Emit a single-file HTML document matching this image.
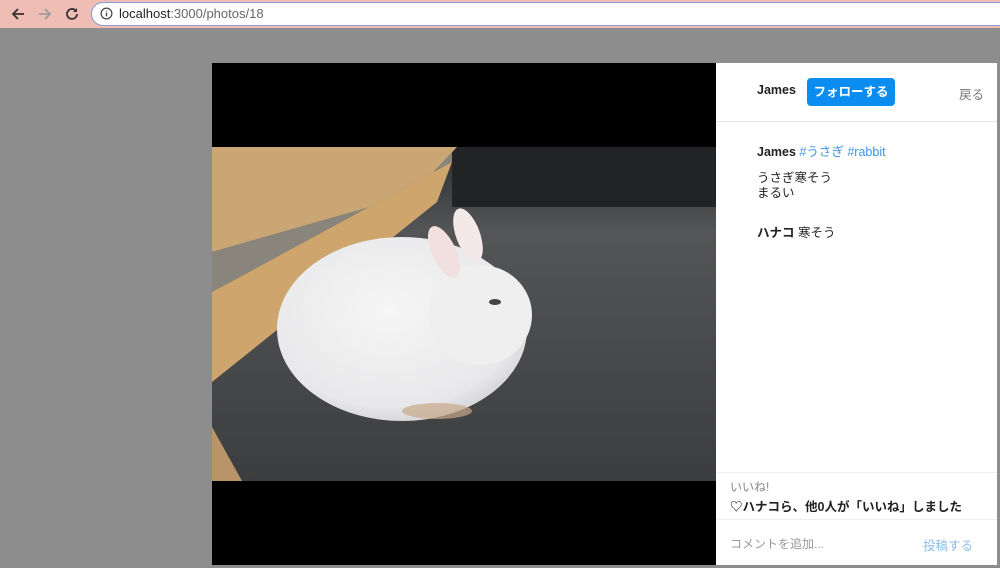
<!DOCTYPE html>
<html><head><meta charset="utf-8"><style>
*{margin:0;padding:0;box-sizing:border-box}
body{width:1000px;height:568px;overflow:hidden;background:#8d8d8d;font-family:"Liberation Sans","Noto Sans CJK JP",sans-serif;position:relative}
.bar{position:absolute;left:0;top:0;width:1000px;height:28px;background:#efbdb3}
.url{position:absolute;left:91px;top:2px;width:920px;height:24px;background:#fff;border:1.5px solid #8a9ad8;border-radius:12px;font-size:13px;color:#222;line-height:21px;padding-left:27px}
.url span{color:#666}
.ic{position:absolute;top:6px}
.photo{position:absolute;left:212px;top:63px;width:504px;height:502px;background:#000}
.panel{position:absolute;left:716px;top:63px;width:281px;height:502px;background:#fff}
.t{position:absolute;font-size:12.5px;color:#222;white-space:nowrap}
b{font-weight:bold}
</style></head><body>
<div class="bar">
<svg class="ic" style="left:10px" width="16" height="16" viewBox="0 0 16 16"><path d="M14 8H3M8 3L3 8l5 5" stroke="#333" stroke-width="1.8" fill="none"/></svg>
<svg class="ic" style="left:37px" width="16" height="16" viewBox="0 0 16 16"><path d="M2 8h11M8 3l5 5-5 5" stroke="#999" stroke-width="1.6" fill="none"/></svg>
<svg class="ic" style="left:64px" width="16" height="16" viewBox="0 0 16 16"><path d="M13 8a5 5 0 1 1-1.5-3.6" stroke="#333" stroke-width="1.8" fill="none"/><path d="M13 2v4h-4z" fill="#333"/></svg>
<div class="url"><svg style="position:absolute;left:8px;top:4px" width="13" height="13" viewBox="0 0 14 14"><circle cx="7" cy="7" r="5.8" stroke="#444" stroke-width="1.3" fill="none"/><path d="M7 6v4M7 4v.8" stroke="#444" stroke-width="1.4"/></svg>localhost<span>:3000/photos/18</span></div>
</div>
<div class="photo">
<svg style="position:absolute;left:0;top:84px" width="504" height="334" viewBox="0 0 504 334">
<defs>
<radialGradient id="rb" cx="0.45" cy="0.4" r="0.65"><stop offset="0" stop-color="#f6f6f6"/><stop offset="0.8" stop-color="#e8e8ea"/><stop offset="1" stop-color="#cfcfd2"/></radialGradient>
<linearGradient id="fl" x1="0" y1="0" x2="0" y2="1"><stop offset="0" stop-color="#2c2d2e"/><stop offset="0.25" stop-color="#545556"/><stop offset="1" stop-color="#3c3d3f"/></linearGradient>
</defs>
<rect width="504" height="334" fill="url(#fl)"/>
<rect x="240" y="0" width="264" height="60" fill="#222324"/>
<polygon points="0,0 245,0 200,48 0,105" fill="#c9a674"/>
<polygon points="0,105 200,48 240,5 240,15 0,145" fill="#8a857c"/>
<polygon points="0,145 240,15 225,55 0,235" fill="#cda56d"/>
<polygon points="0,280 30,334 0,334" fill="#b89468"/>
<ellipse cx="190" cy="182" rx="125" ry="92" fill="url(#rb)"/>
<ellipse cx="268" cy="168" rx="52" ry="50" fill="#efefef"/>
<ellipse cx="232" cy="105" rx="12" ry="28" transform="rotate(-25 232 105)" fill="#f2e0e0"/>
<ellipse cx="256" cy="88" rx="12" ry="28" transform="rotate(-20 256 88)" fill="#f4e8e8"/>
<ellipse cx="225" cy="264" rx="35" ry="8" fill="#c8a88a" opacity="0.7"/>
<ellipse cx="283" cy="155" rx="6" ry="3" fill="#444"/>
</svg>
</div>
<div class="panel">
<div class="t" style="left:41px;top:20px"><b>James</b></div>
<div style="position:absolute;left:91px;top:15px;width:88px;height:28px;background:#0a8cf0;border-radius:4px;color:#fff;font-size:12.5px;font-weight:bold;text-align:center;line-height:28px">フォローする</div>
<div class="t" style="left:243px;top:21px;color:#777">戻る</div>
<div style="position:absolute;left:0;top:58px;width:281px;height:1px;background:#e4e4e4"></div>
<div class="t" style="left:41px;top:78px"><b>James</b> <span style="color:#3a95e6">#うさぎ #rabbit</span></div>
<div class="t" style="left:41px;top:108px;line-height:15px">うさぎ寒そう<br>まるい</div>
<div class="t" style="left:41px;top:159px"><b>ハナコ</b> 寒そう</div>
<div style="position:absolute;left:0;top:409px;width:281px;height:1px;background:#eee"></div>
<div class="t" style="left:14px;top:415px;font-size:12px;color:#888">いいね!</div>
<div class="t" style="left:14px;top:433px"><b>♡ハナコら、他0人が「いいね」しました</b></div>
<div style="position:absolute;left:0;top:456px;width:281px;height:1px;background:#eee"></div>
<div class="t" style="left:14px;top:472px;font-size:12px;color:#999">コメントを追加...</div>
<div class="t" style="left:207px;top:472px;color:#8ebcea">投稿する</div>
</div>
</body></html>
